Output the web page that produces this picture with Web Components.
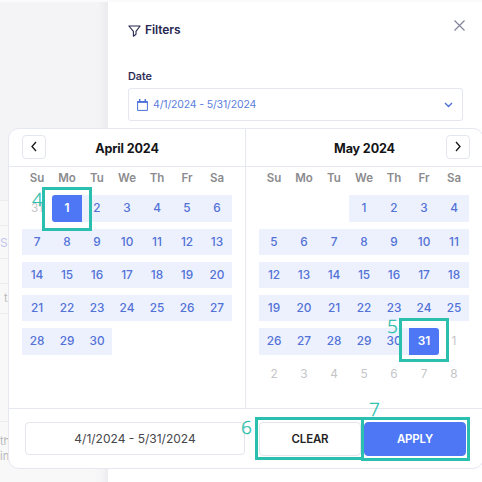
<!DOCTYPE html>
<html lang="en">
<head>
<meta charset="utf-8">
<title>Filters</title>
<style>
    html, body {
        margin: 0;
        width: 482px;
        height: 482px;
        overflow: hidden;
        background: #fff;
        font-family: Inter, "Liberation Sans", sans-serif;
    }
</style>
</head>
<body>
<filter-screen></filter-screen>

<script>
// --- Background list ---
class PageBackdrop extends HTMLElement {
    connectedCallback() {
        this.attachShadow({ mode: "open" }).innerHTML = `
        <style>
            :host {
                display: grid;
                grid-template-rows: 199px 25px 33px 25px 30px 108px 1fr;
                width: 108px;
                height: 480px;
                margin-top: 2px;
                background: linear-gradient(90deg, transparent 98px, #ebebee 108px), #f4f4f6;
                font-size: 11px;
                line-height: 15px;
                color: #b9b9bd;
            }
            div {
                box-sizing: border-box;
                border-bottom: 1px solid #ededf1;
                display: flex;
                align-items: center;
                white-space: pre-line;
            }
            .name { color: #c3c5ee; font-size: 12px; }
            .row { background: linear-gradient(90deg, #f8f8f9 94px, transparent 108px); }
            .tr { padding-left: 4px; }
            .last { align-items: flex-start; padding-top: 12px; border: 0; }
        </style>
        <div></div>
        <div class="row"></div>
        <div class="row name"><slot name="name"></slot></div>
        <div class="row"></div>
        <div class="row tr"><slot name="tag"></slot></div>
        <div class="row"></div>
        <div class="row last"><slot name="note"></slot></div>
        `;
    }
}

// --- Select field with the chosen range ---
class DateField extends HTMLElement {
    connectedCallback() {
        this.attachShadow({ mode: "open" }).innerHTML = `
        <style>
            :host {
                box-sizing: border-box;
                display: flex;
                align-items: center;
                height: 33px;
                padding: 0 9px 0 8px;
                border: 1px solid #e4e6f0;
                border-radius: 3px;
                color: #5b7ddb;
                font-size: 10.5px;
            }
            span { flex: 1; margin-left: 5px; letter-spacing: -0.15px; }
            svg { display: block; fill: none; stroke: #4a70d8; }
        </style>
        <svg width="11" height="12" viewBox="0 0 11 12">
            <path d="M.6 2.5h9.8v8.9H.6z" stroke-width="1"/>
            <path d="M.6 3h9.8" stroke-width="1.8"/>
            <path d="M2.7 0v2.5M8.3 0v2.5" stroke-width="1.4"/>
        </svg>
        <span><slot></slot></span>
        <svg width="9" height="6" viewBox="0 0 9 6"><path d="M1 1l3.5 3.4L8 1" stroke-width="1.4"/></svg>
        `;
    }
}

// --- Side panel ---
class FilterPanel extends HTMLElement {
    connectedCallback() {
        this.attachShadow({ mode: "open" }).innerHTML = `
        <style>
            :host {
                box-sizing: border-box;
                display: flex;
                flex-direction: column;
                height: 480px;
                margin-top: 2px;
                padding: 15px 19px 0 20px;
                background: #fff;
                color: #262750;
            }
            header { display: flex; align-items: flex-start; height: 29px; }
            h1 {
                flex: 1;
                margin: 0;
                padding-top: 4px;
                display: flex;
                align-items: center;
                gap: 4px;
                font-size: 12px;
                line-height: 18px;
                font-weight: 600;
                letter-spacing: -0.1px;
            }
            h1 svg { margin-top: 2px; }
            label {
                margin: 23px 0 3px;
                font-size: 10.8px;
                line-height: 16px;
                font-weight: 500;
                -webkit-text-stroke: 0.15px;
            }
            svg { fill: none; stroke: #262750; display: block; }
            .close { margin: 2px -3px 0 0; stroke: #83839b; }
        </style>
        <header>
            <h1>
                <svg width="13" height="12" viewBox="0 0 13 12">
                    <path d="M.9 1h11.2L8 6.3v2.9l-2.6 2V6.3z" stroke-width="1.1" stroke-linejoin="round"/>
                </svg>
                <slot name="title"></slot>
            </h1>
            <svg class="close" width="13" height="13" viewBox="0 0 13 13">
                <path d="M1.5 1.5l10 10M11.5 1.5l-10 10" stroke-width="1.2"/>
            </svg>
        </header>
        <label><slot name="label"></slot></label>
        <slot></slot>
        `;
    }
}

// --- One month: title, weekdays and days ---
class CalendarMonth extends HTMLElement {
    connectedCallback() {
        this.attachShadow({ mode: "open" });
        this.first = Number(this.getAttribute("offset"));
        this.total = Number(this.getAttribute("days"));
        this.active = Number(this.getAttribute("active"));
        this.render();
    }

    renderDays() {
        let html = "";
        const lead = this.getAttribute("lead") || "";
        for (let i = 0; i < this.first; i++) {
            html += `<i>${i === this.first - 1 ? lead : ""}</i>`;
        }
        for (let d = 1; d <= this.total; d++) {
            html += d === this.active ? `<b>${d}</b>` : `<span>${d}</span>`;
        }
        const tail = Number(this.getAttribute("tail"));
        for (let d = 1; d <= tail; d++) {
            html += `<i>${d}</i>`;
        }
        return html;
    }

    render() {
        const next = this.getAttribute("side") === "right";
        const names = ["Su", "Mo", "Tu", "We", "Th", "Fr", "Sa"];
        this.shadowRoot.innerHTML = `
        <style>
            :host { display: block; }
            header {
                box-sizing: border-box;
                height: 38px;
                padding: 0 13px;
                display: grid;
                grid-template-columns: 24px 1fr 24px;
                align-items: center;
                border-bottom: 1px solid #e6e8f1;
            }
            h2 {
                grid-column: 2;
                grid-row: 1;
                margin: 2px 0 0;
                text-align: center;
                font-size: 12.6px;
                font-weight: 700;
                letter-spacing: -0.15px;
                color: #151518;
            }
            button {
                box-sizing: border-box;
                grid-column: ${next ? 3 : 1};
                grid-row: 1;
                width: 24px;
                height: 24px;
                margin: 0 0 2px;
                padding: 0;
                display: grid;
                place-items: center;
                background: #fff;
                border: 1px solid #e4e7f0;
                border-radius: 4px;
            }
            button svg { display: block; fill: none; stroke: #151518; stroke-width: 1.3; }
            .week, .days {
                display: grid;
                grid-template-columns: repeat(7, 30px);
                margin: 0 13px;
                text-align: center;
            }
            .week {
                height: 28.4px;
                line-height: 23px;
                font-size: 11.5px;
                font-weight: 600;
                color: #8b8b8e;
            }
            .days {
                grid-auto-rows: 26.4px;
                row-gap: 6.8px;
                line-height: 26.6px;
                font-size: 11.8px;
            }
            .days span { background: #edf1fe; color: #5272d6; font-weight: 500; }
            .days i { font-style: normal; color: #c5c5c8; }
            .days b {
                background: #4d77f5;
                color: #fff;
                font-weight: 600;
                border-radius: ${next ? "0 3px 3px 0" : "3px 0 0 3px"};
            }
        </style>
        <header>
            <button><svg width="6" height="11" viewBox="0 0 6 11">
                <path d="${next ? "M1 1l4 4.5L1 10" : "M5 1L1 5.5 5 10"}"/>
            </svg></button>
            <h2><slot></slot></h2>
        </header>
        <div class="week">${names.map((n) => `<div>${n}</div>`).join("")}</div>
        <div class="days">${this.renderDays()}</div>
        `;
    }
}

// --- Popup with two months and the actions ---
class RangePicker extends HTMLElement {
    connectedCallback() {
        this.attachShadow({ mode: "open" }).innerHTML = `
        <style>
            :host {
                box-sizing: border-box;
                display: block;
                background: #fff;
                border: 1px solid #e6e8f1;
                border-radius: 11px;
            }
            .months { display: grid; grid-template-columns: 236px 1fr; height: 279px; }
            .months ::slotted([side="right"]) { border-left: 1px solid #e6e8f1; }
            footer {
                display: grid;
                grid-template-columns: 220px 102px 102px;
                column-gap: 3px;
                padding: 13px 0 0 16px;
                border-top: 1px solid #e6e8f1;
            }
            .value, button {
                box-sizing: border-box;
                height: 34px;
                padding: 0;
                border: 1px solid #e4e6ec;
                border-radius: 4px;
                background: #fff;
                font: 12px/32px Inter, "Liberation Sans", sans-serif;
                color: #46464b;
                text-align: center;
            }
            .value { height: 33px; line-height: 31px; }
            button {
                margin-left: 11px;
                margin-right: -11px;
                color: #1f1f24;
                font-weight: 600;
                font-size: 11.5px;
                letter-spacing: -0.2px;
            }
            .apply { background: #4d77f5; border-color: #4d77f5; color: #fff; }
        </style>
        <div class="months"><slot></slot></div>
        <footer>
            <div class="value"><slot name="value"></slot></div>
            <button><slot name="clear"></slot></button>
            <button class="apply"><slot name="apply"></slot></button>
        </footer>
        `;
    }
}

// --- Numbered outline drawn over a control ---
class StepMark extends HTMLElement {
    connectedCallback() {
        const [x, y, w, h] = this.getAttribute("box").split(" ");
        const [nx, ny] = this.getAttribute("at").split(" ");
        this.attachShadow({ mode: "open" }).innerHTML = `
        <style>
            :host {
                box-sizing: border-box;
                position: absolute;
                left: ${x}px;
                top: ${y}px;
                width: ${w}px;
                height: ${h}px;
                border: 3px solid #2abfae;
                color: #2abfae;
            }
            span {
                position: absolute;
                left: ${nx - x - 3}px;
                top: ${ny - y - 3}px;
                font: 300 19px/20px "Open Sans", "Noto Sans", sans-serif;
                -webkit-text-stroke: 0.35px #2abfae;
            }
        </style>
        <span><slot></slot></span>
        `;
    }
}

class FilterScreen extends HTMLElement {
    connectedCallback() {
        this.attachShadow({ mode: "open" }).innerHTML = `
        <style>
            :host {
                display: grid;
                grid-template-columns: 108px 374px;
                position: relative;
                width: 482px;
                height: 482px;
                overflow: hidden;
                background: #fafafb;
            }
            range-picker {
                position: absolute;
                left: 8px;
                top: 128px;
                width: 476px;
                height: 341px;
            }
        </style>
        <page-backdrop>
            <span slot="name">S</span>
            <span slot="tag">tr</span>
            <span slot="note">th<br>in,</span>
        </page-backdrop>
        <filter-panel>
            <span slot="title">Filters</span>
            <span slot="label">Date</span>
            <date-field>4/1/2024 - 5/31/2024</date-field>
        </filter-panel>
        <range-picker>
            <calendar-month side="left" offset="1" lead="31" days="30" active="1">April 2024</calendar-month>
            <calendar-month side="right" offset="3" days="31" active="31" tail="8">May 2024</calendar-month>
            <span slot="value">4/1/2024 - 5/31/2024</span>
            <span slot="clear">CLEAR</span>
            <span slot="apply">APPLY</span>
        </range-picker>
        <step-mark box="42 187 50 44" at="32 189">4</step-mark>
        <step-mark box="399 318 50 44" at="387 316">5</step-mark>
        <step-mark box="255 417 109 43" at="241 417">6</step-mark>
        <step-mark box="361 417 109 44" at="369 399">7</step-mark>
        `;
    }
}

customElements.define("page-backdrop", PageBackdrop);
customElements.define("date-field", DateField);
customElements.define("filter-panel", FilterPanel);
customElements.define("calendar-month", CalendarMonth);
customElements.define("range-picker", RangePicker);
customElements.define("step-mark", StepMark);
customElements.define("filter-screen", FilterScreen);
</script>
</body>
</html>
